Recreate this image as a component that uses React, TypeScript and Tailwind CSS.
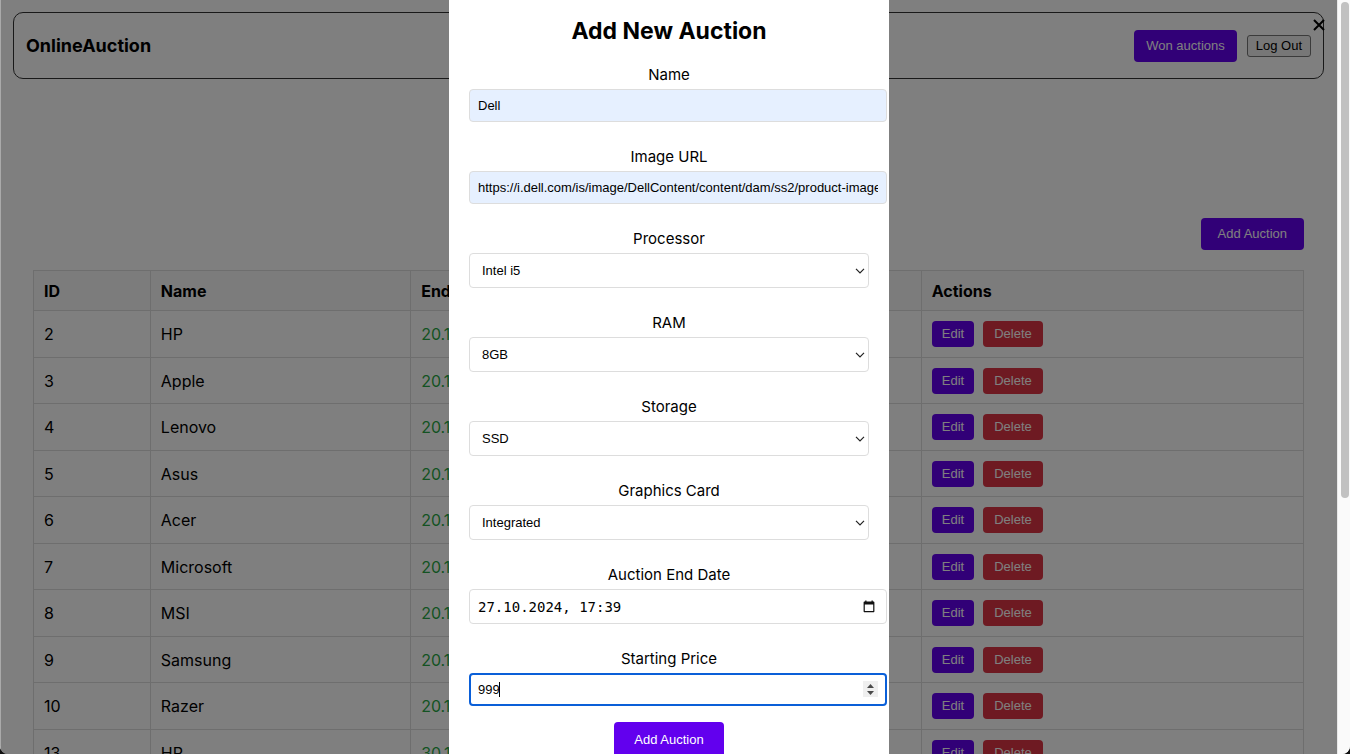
import { useState, type ReactNode } from "react";

type Auction = { id: number; name: string; end: string };

const auctions: Auction[] = [
  { id: 2, name: "HP", end: "20.10.2024" },
  { id: 3, name: "Apple", end: "20.10.2024" },
  { id: 4, name: "Lenovo", end: "20.10.2024" },
  { id: 5, name: "Asus", end: "20.10.2024" },
  { id: 6, name: "Acer", end: "20.10.2024" },
  { id: 7, name: "Microsoft", end: "20.10.2024" },
  { id: 8, name: "MSI", end: "20.10.2024" },
  { id: 9, name: "Samsung", end: "20.10.2024" },
  { id: 10, name: "Razer", end: "20.10.2024" },
  { id: 13, name: "HP", end: "30.10.2024" },
];

const arial = "font-['Liberation_Sans',Arial,sans-serif]";
const inputBase = "block w-[418px] max-w-none rounded border border-[#ddd] px-2 text-black outline-none";

function Field({ id, label, children }: { id: string; label: string; children: ReactNode }) {
  return (
    <div className="flex w-full flex-col">
      <label htmlFor={id} className="mb-1 text-center text-[15px] leading-5">
        {label}
      </label>
      {children}
    </div>
  );
}

function SelectField({ id, label, options }: { id: string; label: string; options: string[] }) {
  return (
    <Field id={id} label={label}>
      <div className="relative w-full">
        <select
          id={id}
          className={`${arial} block h-[35px] w-full appearance-none rounded border border-[#ddd] bg-white px-3 text-[13px] text-black`}
        >
          {options.map((o) => (
            <option key={o}>{o}</option>
          ))}
        </select>
        <svg
          className="pointer-events-none absolute top-[15px] right-1"
          width="10"
          height="6"
          viewBox="0 0 10 6"
          fill="none"
          stroke="#222"
          strokeWidth="1.2"
        >
          <path d="M1 .8l4 4 4-4" />
        </svg>
      </div>
    </Field>
  );
}

function Header() {
  return (
    <header className="flex h-[67px] items-center justify-between rounded-[10px] border border-[#333] px-3">
      <h1 className="text-lg leading-6 font-bold">OnlineAuction</h1>
      <div className={`${arial} flex items-center gap-[10px] text-[13px]`}>
        <button className="h-8 rounded bg-[#6200ee] px-3 text-white">Won auctions</button>
        <button className="h-[22px] rounded-[3px] border border-[#767676] bg-[#efefef] px-2 leading-4">
          Log Out
        </button>
      </div>
    </header>
  );
}

function AuctionTable() {
  return (
    <table className="w-full table-fixed border-collapse text-left text-base leading-5">
      <colgroup>
        <col className="w-[9.2%]" />
        <col className="w-[20.5%]" />
        <col />
        <col className="w-[30.1%]" />
      </colgroup>
      <thead>
        <tr className="h-10 bg-[#f8f8f8]">
          {["ID", "Name", "End Date", "Actions"].map((h) => (
            <th key={h} className="border border-[#ddd] px-[10px] font-bold">
              {h}
            </th>
          ))}
        </tr>
      </thead>
      <tbody>
        {auctions.map((a) => (
          <tr key={a.id} className="odd:h-[47px] even:h-[46px]">
            <td className="border border-[#ddd] px-[10px]">{a.id}</td>
            <td className="border border-[#ddd] px-[10px]">{a.name}</td>
            <td className="border border-[#ddd] px-[10px] text-[#28a745]">{a.end}</td>
            <td className="border border-[#ddd] px-[10px]">
              <div className={`${arial} flex gap-[9px] text-[13px] leading-4 text-white`}>
                <button className="h-[26px] rounded bg-[#6200ee] px-[10px]">Edit</button>
                <button className="h-[26px] rounded bg-[#dc3545] px-[11px]">Delete</button>
              </div>
            </td>
          </tr>
        ))}
      </tbody>
    </table>
  );
}

function AuctionForm() {
  const [name, setName] = useState("Dell");
  const [url, setUrl] = useState(
    "https://i.dell.com/is/image/DellContent/content/dam/ss2/product-images/dell-client-products/notebooks",
  );
  const [date, setDate] = useState("27.10.2024, 17:39");
  const [price, setPrice] = useState("999");
  const step = (by: number) => setPrice(String(Number(price) + by));

  return (
    <form className="w-[440px] bg-white px-5 pt-4 pb-5" onSubmit={(e) => e.preventDefault()}>
      <h2 className="mb-[18px] text-center text-[23px] leading-[31px] font-bold">Add New Auction</h2>
      <div className="flex flex-col gap-[25px]">
        <Field id="name" label="Name">
          <input
            id="name"
            className={`${arial} ${inputBase} h-[33px] bg-[#e6f0ff] text-[13px]`}
            value={name}
            onChange={(e) => setName(e.target.value)}
          />
        </Field>
        <Field id="url" label="Image URL">
          <input
            id="url"
            className={`${arial} ${inputBase} h-[33px] bg-[#e6f0ff] text-[13px]`}
            value={url}
            onChange={(e) => setUrl(e.target.value)}
          />
        </Field>
        <SelectField id="cpu" label="Processor" options={["Intel i5", "Intel i7", "Intel i9"]} />
        <SelectField id="ram" label="RAM" options={["8GB", "16GB", "32GB"]} />
        <SelectField id="storage" label="Storage" options={["SSD", "HDD"]} />
        <SelectField id="gpu" label="Graphics Card" options={["Integrated", "Dedicated"]} />
        <Field id="end" label="Auction End Date">
          <div className="relative w-[418px]">
            <input
              id="end"
              className={`${inputBase} h-[35px] bg-white font-['DejaVu_Sans_Mono',monospace] text-[14px]`}
              value={date}
              onChange={(e) => setDate(e.target.value)}
            />
            <button type="button" aria-label="Pick a date" className="absolute top-[11px] right-3">
              <svg className="block" width="12" height="13" viewBox="0 0 12 13">
                <path
                  fill="#111"
                  fillRule="evenodd"
                  d="M2.2.6h1.3v1h5v-1h1.3v1h.6c.6 0 1 .4 1 1v8.6c0 .6-.4 1-1 1H1.6c-.6 0-1-.4-1-1V2.6c0-.6.4-1 1-1h.6zM1.8 4.6V11h8.4V4.6z"
                />
              </svg>
            </button>
          </div>
        </Field>
        <Field id="price" label="Starting Price">
          <div className="relative w-[418px]">
            <input
              id="price"
              type="number"
              autoFocus
              className={`${arial} block h-[33px] w-full appearance-none rounded border-2 border-[#0a5fd8] bg-white px-[7px] text-[13px] text-black caret-transparent outline-none [&::-webkit-inner-spin-button]:appearance-none`}
              value={price}
              onChange={(e) => setPrice(e.target.value)}
            />
            <span className="pointer-events-none absolute top-[9px] left-[30px] h-[15px] w-px bg-black" />
            <div className="absolute top-2 right-[9px] flex h-4 w-[15px] flex-col bg-[#efefef]">
              <button type="button" aria-label="Increase" className="flex h-2 justify-center pt-[3px]" onClick={() => step(1)}>
                <svg width="7" height="4" viewBox="0 0 7 4" fill="#4a4a4a">
                  <path d="M3.5 0L7 4H0z" />
                </svg>
              </button>
              <button type="button" aria-label="Decrease" className="flex h-2 justify-center pt-[2px]" onClick={() => step(-1)}>
                <svg width="7" height="4" viewBox="0 0 7 4" fill="#4a4a4a">
                  <path d="M0 0h7L3.5 4z" />
                </svg>
              </button>
            </div>
          </div>
        </Field>
      </div>
      <div className="mt-4 flex justify-center">
        <button className={`${arial} h-[35px] rounded bg-[#6200ee] px-5 text-[13px] text-white`}>Add Auction</button>
      </div>
    </form>
  );
}

export default function App() {
  return (
    <div className="h-screen overflow-hidden bg-[#111] font-['Inter',sans-serif] text-black">
      <div className="flex h-full overflow-hidden rounded-b-[8px] bg-white">
        <main className="relative min-w-0 flex-1 overflow-hidden border-l border-[#aaa]">
          <div className="px-3 pt-3 pr-[13px]">
            <Header />
            <section className="px-5 pt-[139px]">
              <div className="mb-5 flex justify-end">
                <button className={`${arial} h-8 rounded bg-[#6200ee] px-[17px] text-[13px] text-white`}>
                  Add Auction
                </button>
              </div>
              <AuctionTable />
            </section>
          </div>
          <div role="dialog" aria-label="Add New Auction" className="absolute inset-0 flex justify-center bg-black/50">
            <AuctionForm />
            <button aria-label="Close" className="absolute top-[19px] right-3">
              <svg className="block" width="12" height="12" viewBox="0 0 12 12" stroke="#000" strokeWidth="2" fill="none">
                <path d="M1 1l10 10M11 1L1 11" />
              </svg>
            </button>
          </div>
        </main>
        <div className="w-[13px] shrink-0 border-l border-[#e8e8e8] bg-[#fafafa] pt-[2px] pl-[3px]">
          <div className="h-[66%] w-2 rounded-full bg-[#c1c1c1]" />
        </div>
      </div>
    </div>
  );
}
